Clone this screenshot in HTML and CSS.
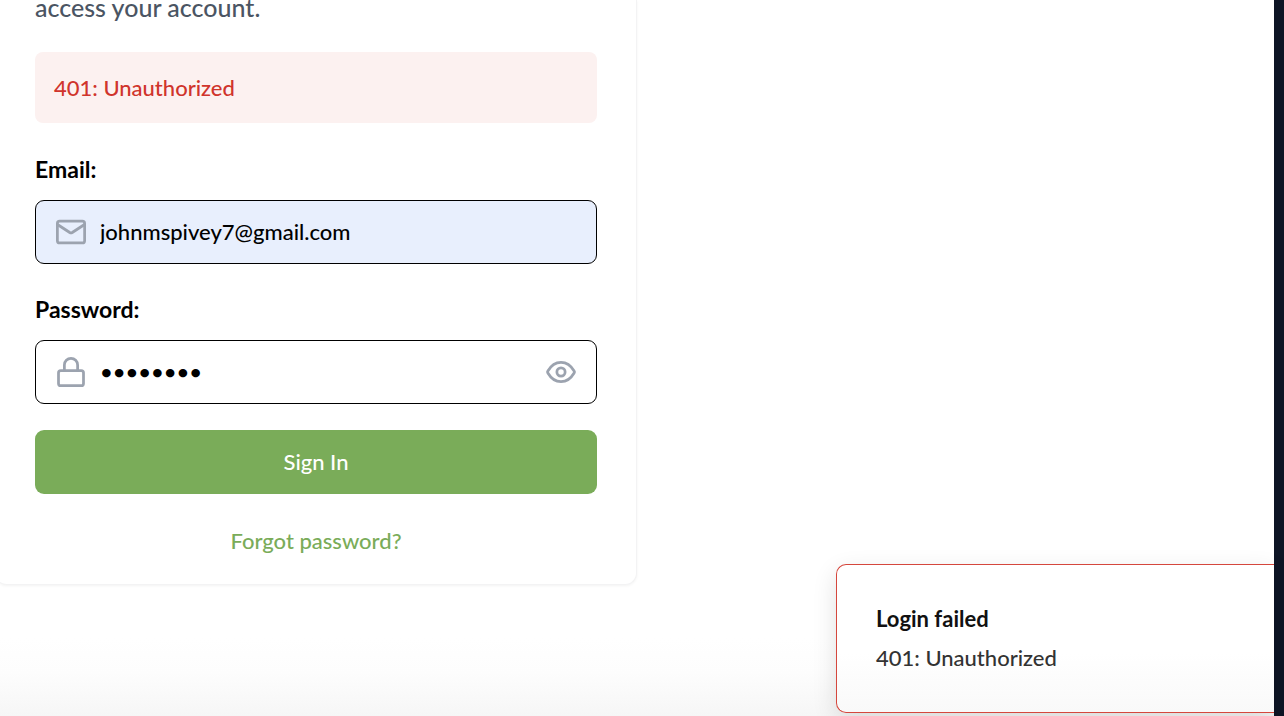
FILE: index.html
```html
<!DOCTYPE html>
<html lang="en">
<head>
<meta charset="utf-8">
<title>Sign In</title>
<link rel="stylesheet" href="styles.css">
</head>
<body>
<main class="page">
  <form class="card">
    <p class="intro">access your account.</p>
    <div class="alert" role="alert">401: Unauthorized</div>
    <div class="fields">
      <div class="field">
        <label class="label" for="email">Email:</label>
        <div class="control control-filled">
          <svg class="icon" viewBox="0 0 24 24" aria-hidden="true"><rect x="1.100" y="3.300" width="21.800" height="17.400" rx="1.800"/><path d="M1.500 6.200 11 12.400Q12 13 13 12.400L22.500 6.200"/></svg>
          <input class="input" id="email" type="email" value="johnmspivey7@gmail.com">
        </div>
      </div>
      <div class="field">
        <label class="label" for="password">Password:</label>
        <div class="control">
          <svg class="icon" viewBox="0 0 24 24" aria-hidden="true"><rect x="2" y="10.800" width="20" height="12.100" rx="1.800"/><path d="M6.700 10.800V6.400a5.300 5.300 0 0 1 10.600 0v4.400"/></svg>
          <input class="input" id="password" type="password" value="password">
          <button class="reveal" type="button" aria-label="Show password">
            <svg class="icon" viewBox="0 0 24 24" aria-hidden="true"><path d="M1.500 11.200C4 6.900 7.600 4.300 12 4.300S20 6.900 22.500 11.200Q23 12 22.500 12.800C20 17.100 16.400 19.700 12 19.700S4 17.100 1.500 12.800Q1 12 1.500 11.200z"/><circle cx="12" cy="12" r="3.300"/></svg>
          </button>
        </div>
      </div>
    </div>
    <button class="submit" type="button">Sign In</button>
    <a class="forgot" href="#">Forgot password?</a>
  </form>
</main>
<div class="edge"></div>
<section class="toast" role="status">
  <strong class="toast-title">Login failed</strong>
  <span>401: Unauthorized</span>
</section>
</body>
</html>
```
FILE: styles.css
```css
* { box-sizing: border-box; }
body {
  margin: 0;
  display: flex;
  min-height: 100vh;
  overflow: hidden;
  background: #fff;
  color: #000;
  font: 500 22px/32px Lato, sans-serif;
}
button, input { font: inherit; }
.page {
  flex: 1;
  background: linear-gradient(#fff 89%, #fdfdfd 94%, #f6f6f6);
}
.edge { flex: 0 0 10px; background: #0e1525; }
.card {
  display: flex;
  flex-direction: column;
  margin: 0 50% 0 -5px;
  padding: 0 39px 27px 40px;
  background: #fff;
  border: 1px solid #f3f3f4;
  border-top: 0;
  border-left: 0;
  border-radius: 0 0 12px 12px;
  box-shadow: 0 1px 3px #0000000d;
}
.intro {
  margin: -9px 0 29px;
  color: #4b5563;
  font-size: 25px;
}
.alert {
  margin-bottom: 30px;
  padding: 20px 19px 19px;
  border-radius: 8px;
  background: #fcf1f0;
  color: #d0342c;
}
.fields {
  display: grid;
  gap: 29px;
  margin-bottom: 26px;
}
.label {
  display: block;
  margin-bottom: 15px;
  font-size: 23px;
  font-weight: 700;
}
.control {
  display: flex;
  align-items: center;
  gap: 14px;
  height: 64px;
  padding: 0 20px;
  border: 1px solid #000;
  border-radius: 9px;
}
.control-filled { background: #e8effd; }
.icon {
  display: block;
  flex: none;
  width: 30px;
  height: 30px;
  fill: none;
  stroke: #9ca3af;
  stroke-width: 2.2;
  stroke-linecap: round;
  stroke-linejoin: round;
}
.input {
  flex: 1;
  min-width: 0;
  padding: 0;
  border: 0;
  outline: 0;
  background: transparent;
  color: #000;
}
.reveal { padding: 0; border: 0; background: transparent; }
.submit {
  height: 64px;
  border: 0;
  border-radius: 9px;
  background: #7aac59;
  color: #fff;
}
.forgot {
  align-self: center;
  margin-top: 31px;
  color: #7aac59;
  text-decoration: none;
}
.toast {
  position: absolute;
  right: 10px;
  bottom: 3px;
  display: flex;
  flex-direction: column;
  gap: 7px;
  width: 438px;
  padding: 38px 39px;
  border: 1px solid #d5473d;
  border-right: 0;
  border-radius: 10px 0 0 10px;
  background: linear-gradient(#fff 60%, #f9f9f9);
  color: #333;
  box-shadow: 0 8px 24px #0000001f;
}
.toast-title { color: #111; }
```
